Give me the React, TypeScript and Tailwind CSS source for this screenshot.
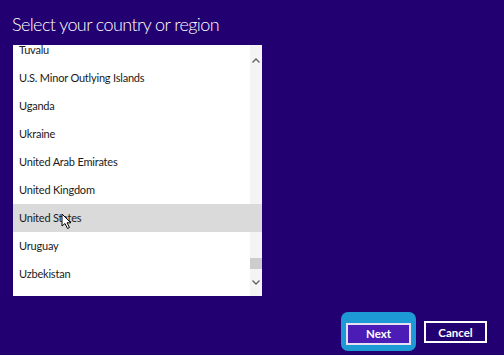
import React from 'react';

const countries = [
  'Tuvalu',
  'U.S. Minor Outlying Islands',
  'Uganda',
  'Ukraine',
  'United Arab Emirates',
  'United Kingdom',
  'United States',
  'Uruguay',
  'Uzbekistan',
];

const Cursor = () => (
  <svg width="11" height="17" viewBox="0 0 11 17" className="absolute left-[48px] top-[9px]">
    <path d="M1 1 L1 13 L4 10.5 L6.5 15.5 L8.5 14.5 L6 9.8 L9.8 9.8 Z" fill="#fff" stroke="#000" strokeWidth="1" strokeLinejoin="round" />
  </svg>
);

export default function App() {
  return (
    <div className="w-[504px] h-[355px] bg-[#230071] overflow-hidden flex flex-col font-['Lato',sans-serif]">
      <h1 className="pl-[12px] pt-[11px] text-[18px] leading-[26px] font-light text-white tracking-[-0.6px]">
        Select your country or region
      </h1>

      <div className="ml-[13px] mt-[8px] w-[249px] h-[251px] bg-white relative overflow-hidden flex">
        <div className="flex-1 -mt-[9px] flex flex-col">
          {countries.map((c) => (
            <div
              key={c}
              className={`h-[28px] shrink-0 flex items-center pl-[6px] text-[11px] tracking-[-0.2px] text-[#1a1a1a] relative ${
                c === 'United States' ? 'bg-[#dadada] -mr-[12px]' : ''
              }`}
            >
              {c}
              {c === 'United States' && <Cursor />}
            </div>
          ))}
        </div>

        {/* scrollbar */}
        <div className="w-[12px] bg-[#f0f0f0]/70 flex flex-col items-center pt-[13px] pb-[11px]">
          <svg width="8" height="5" viewBox="0 0 8 5">
            <path d="M0.5 4.5 L4 1 L7.5 4.5" fill="none" stroke="#606060" strokeWidth="1.3" />
          </svg>
          <div className="flex-1" />
          <div className="w-[12px] h-[11px] bg-[#cdcdcd] mb-[11px]" />
          <svg width="8" height="5" viewBox="0 0 8 5">
            <path d="M0.5 0.5 L4 4 L7.5 0.5" fill="none" stroke="#606060" strokeWidth="1.3" />
          </svg>
        </div>
      </div>

      <div className="flex justify-end items-center gap-[8px] pr-[17px] mt-[16px]">
        <div className="rounded-[7px] bg-[#1d9ad6] px-[5px] pt-[8px] pb-[6px]">
          <button className="w-[65px] h-[22px] bg-[#4b1cb6] border-[2px] border-[#e6e0f5] text-white text-[11.5px] font-bold">
            Next
          </button>
        </div>
        <button className="w-[63px] h-[22px] bg-[#230071] border-[2px] border-white text-white text-[11.5px] font-bold mt-[2px]">
          Cancel
        </button>
      </div>
    </div>
  );
}
